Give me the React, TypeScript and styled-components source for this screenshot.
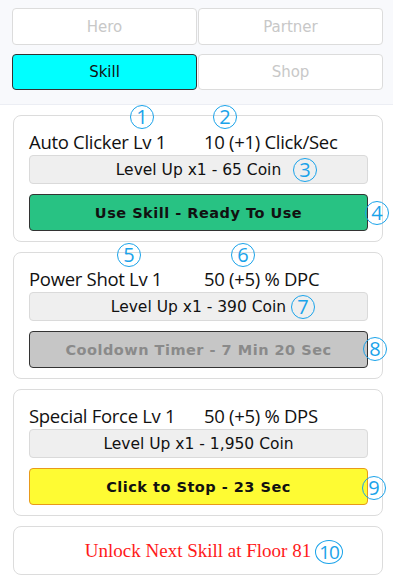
import React from "react";
import styled, { createGlobalStyle } from "styled-components";

const Global = createGlobalStyle`
  html, body { margin: 0; padding: 0; background: #ffffff; }
  body { font-family: "Open Sans", "Noto Sans", sans-serif; }
  * { box-sizing: border-box; }
`;

const comic = `"DejaVu Sans", "Comic Sans MS", sans-serif`;

const Page = styled.div`
  width: 393px;
`;

const Header = styled.div`
  background: #f8f9fc;
  border-bottom: 1px solid #eceef4;
  padding: 8px 10px 14px 12px;
  display: grid;
  grid-template-columns: 185px 185px;
  column-gap: 1px;
  row-gap: 9px;
`;

const Tab = styled.div<{ $active?: boolean; $h: number }>`
  height: ${(p) => p.$h}px;
  display: flex;
  align-items: center;
  justify-content: center;
  border-radius: 4px;
  border: 1px solid ${(p) => (p.$active ? "#333" : "#dcdcdc")};
  background: ${(p) => (p.$active ? "#00ffff" : "#ffffff")};
  color: ${(p) => (p.$active ? "#111" : "#c8c8c8")};
  font-family: ${comic};
  font-size: 15px;
`;

const List = styled.div`
  padding: 10px 0 0 13px;
  display: flex;
  flex-direction: column;
  gap: 10px;
`;

const Card = styled.div`
  position: relative;
  width: 370px;
  border: 1px solid #dcdcdc;
  border-radius: 8px;
  padding: 19px 14px 10px 15px;
  display: flex;
  flex-direction: column;
`;

const InfoRow = styled.div`
  height: 20px;
  display: grid;
  grid-template-columns: 175px 1fr;
  align-items: start;
  font-size: 18.5px;
  line-height: 14px;
  color: #111;
  white-space: nowrap;
  letter-spacing: -0.3px;
`;

const LevelBtn = styled.div`
  height: 29px;
  background: #efefef;
  border: 1px solid #dadada;
  border-radius: 4px;
  display: flex;
  align-items: center;
  justify-content: center;
  font-family: ${comic};
  font-size: 15.5px;
  color: #111;
`;

type Variant = "green" | "grey" | "yellow";

const ActionBtn = styled.div<{ $v: Variant }>`
  margin-top: 10px;
  height: 37px;
  border-radius: 4px;
  display: flex;
  align-items: center;
  justify-content: center;
  font-family: ${comic};
  font-weight: bold;
  font-size: 14.5px;
  letter-spacing: 0.5px;
  background: ${(p) =>
    p.$v === "green" ? "#28c283" : p.$v === "grey" ? "#c6c6c6" : "#fefb33"};
  border: 1px solid ${(p) => (p.$v === "yellow" ? "#e89a1a" : "#333")};
  color: ${(p) => (p.$v === "grey" ? "#8a8a8a" : "#111")};
`;

const UnlockCard = styled.div`
  position: relative;
  width: 370px;
  height: 49px;
  border: 1px solid #dcdcdc;
  border-radius: 8px;
  display: flex;
  align-items: center;
  justify-content: center;
  font-family: "Liberation Serif", serif;
  font-size: 19px;
  color: #ff1a1a;
`;

const Mark = styled.span<{ $x: number; $y: number }>`
  position: absolute;
  left: ${(p) => p.$x - 12}px;
  top: ${(p) => p.$y - 12}px;
  width: 24px;
  height: 24px;
  border: 1px solid #1aa3ea;
  border-radius: 50%;
  display: flex;
  align-items: center;
  justify-content: center;
  font-family: "Open Sans", sans-serif;
  font-size: 20px;
  line-height: 1;
  color: #1aa3ea;
  background: transparent;
  pointer-events: none;
`;

const MarkWide = styled(Mark)`
  width: 28px;
  left: ${(p) => p.$x - 14}px;
  font-size: 19px;
  letter-spacing: -1px;
`;

const mk = (n: number, px: number, py: number, top: number) => (
  <Mark $x={px - 14} $y={py - top - 1}>{n}</Mark>
);

export default function App() {
  return (
    <Page>
      <Global />
      <Header>
        <Tab $h={37}>Hero</Tab>
        <Tab $h={37}>Partner</Tab>
        <Tab $h={36} $active>Skill</Tab>
        <Tab $h={36}>Shop</Tab>
      </Header>
      <List>
        <Card>
          <InfoRow>
            <span>Auto Clicker Lv 1</span>
            <span>10 (+1) Click/Sec</span>
          </InfoRow>
          <LevelBtn>Level Up x1 - 65 Coin</LevelBtn>
          <ActionBtn $v="green">Use Skill - Ready To Use</ActionBtn>
          {mk(1, 142, 116, 114)}
          {mk(2, 225, 116, 114)}
          {mk(3, 305, 169, 114)}
          {mk(4, 377, 212, 114)}
        </Card>
        <Card>
          <InfoRow>
            <span>Power Shot Lv 1</span>
            <span>50 (+5) % DPC</span>
          </InfoRow>
          <LevelBtn>Level Up x1 - 390 Coin</LevelBtn>
          <ActionBtn $v="grey">Cooldown Timer - 7 Min 20 Sec</ActionBtn>
          {mk(5, 129, 255, 252)}
          {mk(6, 243, 255, 252)}
          {mk(7, 303, 307, 252)}
          {mk(8, 375, 349, 252)}
        </Card>
        <Card>
          <InfoRow>
            <span>Special Force Lv 1</span>
            <span>50 (+5) % DPS</span>
          </InfoRow>
          <LevelBtn>Level Up x1 - 1,950 Coin</LevelBtn>
          <ActionBtn $v="yellow">Click to Stop - 23 Sec</ActionBtn>
          {mk(9, 374, 487, 388)}
        </Card>
        <UnlockCard>
          <span>Unlock Next Skill at Floor 81</span>
          <MarkWide $x={329 - 14} $y={551 - 525 - 1}>10</MarkWide>
        </UnlockCard>
      </List>
    </Page>
  );
}
